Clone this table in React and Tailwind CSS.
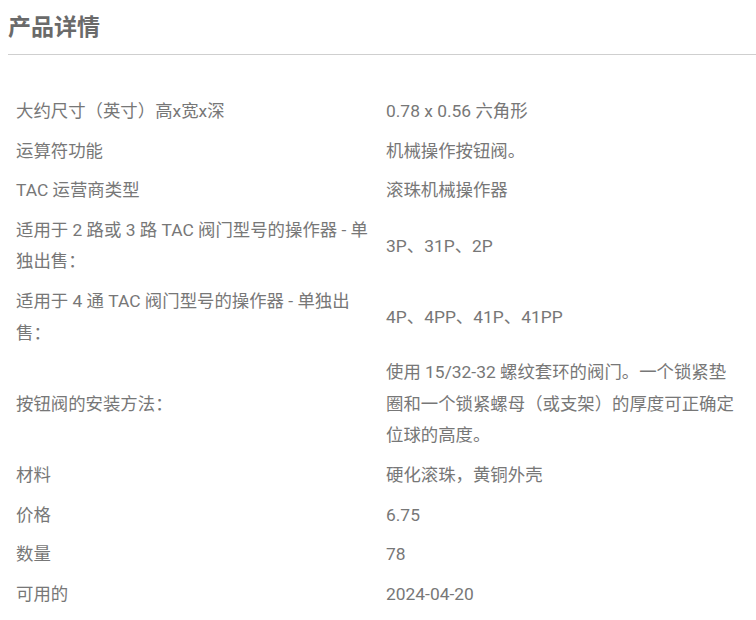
import React from 'react';

const rows = [
  ['大约尺寸（英寸）高x宽x深', '0.78 x 0.56 六角形'],
  ['运算符功能', '机械操作按钮阀。'],
  ['TAC 运营商类型', '滚珠机械操作器'],
  ['适用于 2 路或 3 路 TAC 阀门型号的操作器 - 单独出售：', '3P、31P、2P'],
  ['适用于 4 通 TAC 阀门型号的操作器 - 单独出售：', '4P、4PP、41P、41PP'],
  ['按钮阀的安装方法：', '使用 15/32-32 螺纹套环的阀门。一个锁紧垫圈和一个锁紧螺母（或支架）的厚度可正确定位球的高度。'],
  ['材料', '硬化滚珠，黄铜外壳'],
  ['价格', '6.75'],
  ['数量', '78'],
  ['可用的', '2024-04-20'],
];

export default function App() {
  return (
    <div className="bg-white min-h-[620px] pl-2 text-[#777] font-['Roboto','Noto_Sans_CJK_SC',sans-serif]">
      {/* 标题 */}
      <div className="border-b border-[#cfcfcf] pt-[13px] pb-[11px]">
        <h2 className="text-[23px] leading-[30px] font-bold text-[#6a6a6a]">产品详情</h2>
      </div>

      <div className="mt-[37px] mr-2">
        {rows.map(([label, value]) => (
          <div key={label} className="grid grid-cols-2 text-[17.4px] leading-[31.6px]">
            <div className="px-2 py-1 flex items-center">{label}</div>
            <div className="px-2 py-1 flex items-center">{value}</div>
          </div>
        ))}
      </div>
    </div>
  );
}
